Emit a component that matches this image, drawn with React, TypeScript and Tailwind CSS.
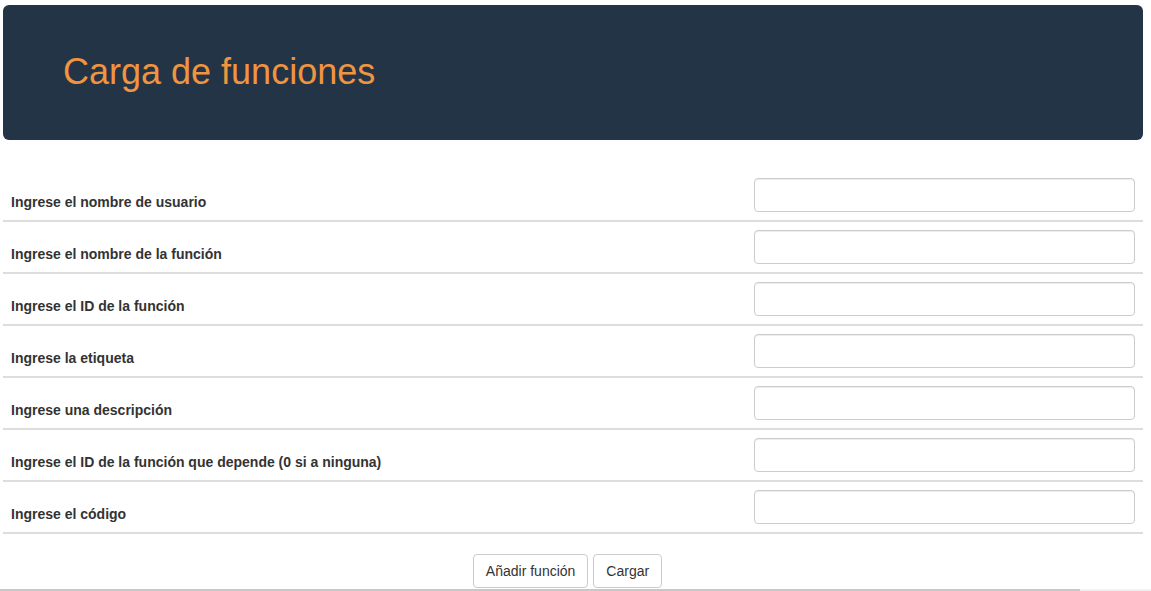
const fields = [
    'Ingrese el nombre de usuario',
    'Ingrese el nombre de la función',
    'Ingrese el ID de la función',
    'Ingrese la etiqueta',
    'Ingrese una descripción',
    'Ingrese el ID de la función que depende (0 si a ninguna)',
    'Ingrese el código',
]

function App() {
    return (
        <div className="w-[1151px] font-['Liberation_Sans',Arial,sans-serif] text-[#333] bg-white">
            <div className="w-[1143px] pl-[3px] pt-[5px]">
                <div className="h-[135px] bg-[#243447] rounded-md flex items-center pl-[60px]">
                    <h1 className="text-[36px] leading-[40px] text-[#f0953f] pb-[2px]">Carga de funciones</h1>
                </div>

                <div className="mt-[30px]">
                    {fields.map((label) => (
                        <div key={label} className="flex items-end justify-between py-2 pl-2 pr-2 border-b-2 border-[#dddddd]">
                            <label className="text-[14px] leading-[18px] font-bold pb-[1px]">{label}</label>
                            <input
                                type="text"
                                className="w-[381px] h-[34px] border border-[#cccccc] rounded px-3 text-sm shadow-[inset_0_1px_1px_rgba(0,0,0,0.075)] outline-none"
                            />
                        </div>
                    ))}
                </div>
            </div>

            <div className="flex justify-center gap-[5px] mt-[20px] pr-[16px]">
                <button className="h-[34px] px-3 border border-[#cccccc] rounded bg-white text-sm text-[#333]">Añadir función</button>
                <button className="h-[34px] px-3 border border-[#cccccc] rounded bg-white text-sm text-[#333]">Cargar</button>
            </div>

            <div className="flex h-[3px] mt-[1px] bg-[#f1f1f1]">
                <div className="w-[1080px] bg-[#c8c8c8]" />
            </div>
        </div>
    )
}

export default App
